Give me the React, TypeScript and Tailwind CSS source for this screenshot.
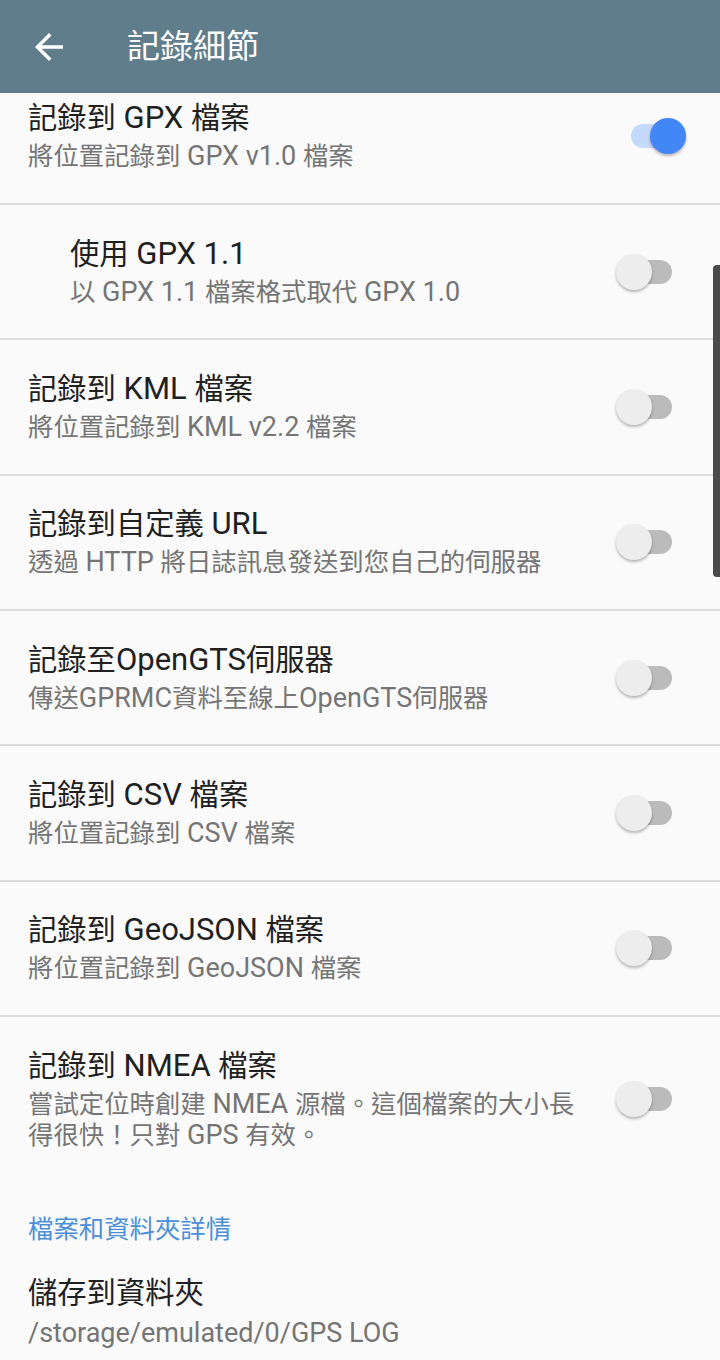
import React from "react";

const CJK_RE = /([\u3000-\u303f\u3400-\u9fff\uff00-\uffef]+)/;

function Mixed({ text, cjk }: { text: string; cjk: string }) {
  const parts = text.split(CJK_RE).filter((p) => p.length > 0);
  return (
    <>
      {parts.map((p, i) =>
        CJK_RE.test(p) ? (
          <span key={i} className={cjk}>
            {p}
          </span>
        ) : (
          <span key={i}>{p}</span>
        )
      )}
    </>
  );
}

function Title({ text }: { text: string }) {
  return (
    <div className="text-[31px] leading-[36px] text-[#202020] whitespace-nowrap">
      <Mixed text={text} cjk="text-[29.3px]" />
    </div>
  );
}

function Sub({ text }: { text: string }) {
  return (
    <div className="text-[27px] leading-[31px] text-[#757575] whitespace-nowrap">
      <Mixed text={text} cjk="text-[25.4px]" />
    </div>
  );
}

function Toggle({ on }: { on: boolean }) {
  return (
    <div className="relative w-[70px] h-[36px] shrink-0">
      <div
        className={`absolute left-[15px] top-[6px] w-[41px] h-[24px] rounded-full ${
          on ? "bg-[#c4d9fb]" : "bg-[#bbbbbb]"
        }`}
      />
      <div
        className={`absolute top-0 w-[36px] h-[36px] rounded-full shadow-[0_2px_3px_rgba(0,0,0,0.28)] ${
          on ? "left-[34px] bg-[#4287f5]" : "left-0 bg-[#ededed]"
        }`}
      />
    </div>
  );
}

function Row({
  title,
  subtitle,
  on = false,
  indent = false,
}: {
  title: string;
  subtitle: string;
  on?: boolean;
  indent?: boolean;
}) {
  return (
    <div className="flex items-center h-[135.33px] border-b-2 border-[#dcdcdc] pr-[34px]">
      <div className={`flex-1 flex flex-col ${indent ? "pl-[70px]" : "pl-[28px]"}`}>
        <Title text={title} />
        <div className="mt-[5px]">
          <Sub text={subtitle} />
        </div>
      </div>
      <Toggle on={on} />
    </div>
  );
}

export default function App() {
  return (
    <div className="relative w-[720px] h-[1360px] overflow-hidden bg-[#fafafa] font-[Roboto,'Noto_Sans_CJK_TC',sans-serif]">
      <div className="relative z-10 flex items-center h-[93px] bg-[#607d8b]">
        <svg className="ml-[28px] w-[42px] h-[42px]" viewBox="0 0 24 24" fill="#ffffff">
          <path d="M20 11H7.83l5.59-5.59L12 4l-8 8 8 8 1.41-1.41L7.83 13H20v-2z" />
        </svg>
        <div className="ml-[57px] text-[33px] leading-[40px] text-white">記錄細節</div>
      </div>

      <div className="mt-[-23.33px]">
        <Row title="記錄到 GPX 檔案" subtitle="將位置記錄到 GPX v1.0 檔案" on />
        <Row title="使用 GPX 1.1" subtitle="以 GPX 1.1 檔案格式取代 GPX 1.0" indent />
        <Row title="記錄到 KML 檔案" subtitle="將位置記錄到 KML v2.2 檔案" />
        <Row title="記錄到自定義 URL" subtitle="透過 HTTP 將日誌訊息發送到您自己的伺服器" />
        <Row title="記錄至OpenGTS伺服器" subtitle="傳送GPRMC資料至線上OpenGTS伺服器" />
        <Row title="記錄到 CSV 檔案" subtitle="將位置記錄到 CSV 檔案" />
        <Row title="記錄到 GeoJSON 檔案" subtitle="將位置記錄到 GeoJSON 檔案" />

        <div className="flex items-center py-[31px] pr-[34px]">
          <div className="flex-1 flex flex-col pl-[28px]">
            <Title text="記錄到 NMEA 檔案" />
            <div className="mt-[5px]">
              <Sub text="嘗試定位時創建 NMEA 源檔。這個檔案的大小長" />
              <Sub text="得很快！只對 GPS 有效。" />
            </div>
          </div>
          <Toggle on={false} />
        </div>

        <div className="pt-[31px] pl-[28px] text-[25.4px] leading-[32px] text-[#4a8fd8]">檔案和資料夾詳情</div>

        <div className="pt-[30px] pl-[28px] flex flex-col">
          <Title text="儲存到資料夾" />
          <div className="mt-[7px]">
            <Sub text="/storage/emulated/0/GPS LOG" />
          </div>
        </div>
      </div>

      <div className="absolute right-0 top-[265px] w-[7px] h-[312px] bg-[#4a4a4a] rounded-l-[4px]" />
    </div>
  );
}
